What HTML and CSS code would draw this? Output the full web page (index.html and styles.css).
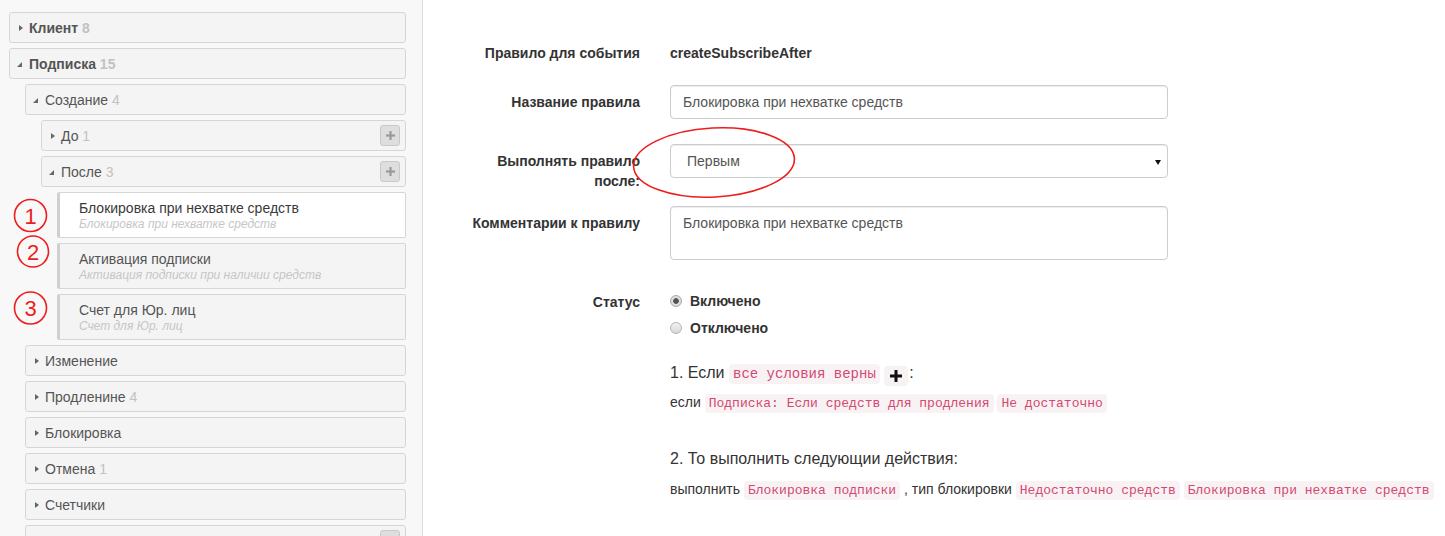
FILE: index.html
```html
<!DOCTYPE html>
<html lang="ru">
<head>
<meta charset="utf-8">
<title>Правила</title>
<link rel="stylesheet" href="styles.css">
</head>
<body>
<div class="page">
  <aside class="sidebar">
    <div class="panel top"><span class="tri closed"></span><span class="name">Клиент</span>&nbsp;<span class="cnt">8</span></div>
    <div class="panel top"><span class="tri open"></span><span class="name">Подписка</span>&nbsp;<span class="cnt">15</span></div>
    <div class="children">
      <div class="panel"><span class="tri open"></span><span class="name">Создание</span>&nbsp;<span class="cnt">4</span></div>
      <div class="children">
        <div class="panel"><span class="tri closed"></span><span class="name">До</span>&nbsp;<span class="cnt">1</span><span class="add"><svg width="9" height="9" viewBox="0 0 9 9"><rect x="3.4" y="0" width="2.2" height="9" fill="#9a9a9a"/><rect x="0" y="3.4" width="9" height="2.2" fill="#9a9a9a"/></svg></span></div>
        <div class="panel"><span class="tri open"></span><span class="name">После</span>&nbsp;<span class="cnt">3</span><span class="add"><svg width="9" height="9" viewBox="0 0 9 9"><rect x="3.4" y="0" width="2.2" height="9" fill="#9a9a9a"/><rect x="0" y="3.4" width="9" height="2.2" fill="#9a9a9a"/></svg></span></div>
        <div class="children">
          <div class="rule active">
            <div class="rule-title">Блокировка при нехватке средств</div>
            <div class="rule-sub">Блокировка при нехватке средств</div>
          </div>
          <div class="rule">
            <div class="rule-title">Активация подписки</div>
            <div class="rule-sub">Активация подписки при наличии средств</div>
          </div>
          <div class="rule">
            <div class="rule-title">Счет для Юр. лиц</div>
            <div class="rule-sub">Счет для Юр. лиц</div>
          </div>
        </div>
      </div>
      <div class="panel"><span class="tri closed"></span><span class="name">Изменение</span></div>
      <div class="panel"><span class="tri closed"></span><span class="name">Продленине</span>&nbsp;<span class="cnt">4</span></div>
      <div class="panel"><span class="tri closed"></span><span class="name">Блокировка</span></div>
      <div class="panel"><span class="tri closed"></span><span class="name">Отмена</span>&nbsp;<span class="cnt">1</span></div>
      <div class="panel"><span class="tri closed"></span><span class="name">Счетчики</span></div>
      <div class="panel"><span class="tri closed"></span><span class="name">Уведомления</span>&nbsp;<span class="cnt">6</span><span class="add"><svg width="9" height="9" viewBox="0 0 9 9"><rect x="3.4" y="0" width="2.2" height="9" fill="#9a9a9a"/><rect x="0" y="3.4" width="9" height="2.2" fill="#9a9a9a"/></svg></span></div>
    </div>
  </aside>

  <main class="main">
    <div class="row r1">
      <div class="lbl">Правило для события</div>
      <div class="ctl"><div class="static">createSubscribeAfter</div></div>
    </div>
    <div class="row r2">
      <div class="lbl">Название правила</div>
      <div class="ctl"><input class="input" type="text" value="Блокировка при нехватке средств"></div>
    </div>
    <div class="row r3">
      <div class="lbl">Выполнять правило после:</div>
      <div class="ctl"><div class="select"><span>Первым</span><span class="caret"></span></div></div>
    </div>
    <div class="row r4">
      <div class="lbl">Комментарии к правилу</div>
      <div class="ctl"><textarea class="input area">Блокировка при нехватке средств</textarea></div>
    </div>
    <div class="row r5">
      <div class="lbl">Статус</div>
      <div class="ctl radios">
        <div class="radio"><span class="dot checked"></span>Включено</div>
        <div class="radio"><span class="dot"></span>Отключено</div>
      </div>
    </div>
    <div class="row">
      <div class="lbl"></div>
      <div class="ctl logic">
        <div class="h">1. Если <code class="big">все условия верны</code> <span class="pcode"><svg width="12" height="12" viewBox="0 0 12 12"><rect x="4.5" y="0" width="3" height="12" fill="#111"/><rect x="0" y="4.5" width="12" height="3" fill="#111"/></svg></span>:</div>
        <div class="p first">если <code>Подписка: Если средств для продления</code> <code>Не достаточно</code></div>
        <div class="h h2">2. То выполнить следующии действия:</div>
        <div class="p second">выполнить <code>Блокировка подписки</code> , тип блокировки <code>Недостаточно средств</code> <code>Блокировка при нехватке средств</code></div>
      </div>
    </div>
  </main>

  <svg class="marks" width="1445" height="536" viewBox="0 0 1445 536">
    <g fill="none" stroke="#ee1c1c" stroke-width="1.6">
      <circle cx="30.5" cy="215.5" r="16"/>
      <circle cx="33" cy="251.5" r="15.5"/>
      <circle cx="30.5" cy="308" r="16"/>
      <ellipse cx="714" cy="162.5" rx="80.5" ry="34.5" transform="rotate(-3 714 162.5)"/>
    </g>
    <g fill="#ee1c1c" font-family="Liberation Sans, Arial, sans-serif" font-size="22" text-anchor="middle">
      <text x="30.5" y="223.5">1</text>
      <text x="33" y="259.5">2</text>
      <text x="30.5" y="316">3</text>
    </g>
  </svg>
</div>
</body>
</html>
```

FILE: styles.css
```css
* { box-sizing: border-box; }
html, body { margin: 0; height: 100%; }
body {
  font-family: "Liberation Sans", Arial, sans-serif;
  font-size: 14px;
  line-height: 20px;
  color: #333;
  background: #fff;
  overflow: hidden;
}
.page { position: relative; display: flex; min-height: 536px; }

/* sidebar */
.sidebar {
  width: 423px;
  flex: none;
  background: #f8f8f8;
  border-right: 1px solid #dcdcdc;
  padding: 12px 16px 0 9px;
}
.children { padding-left: 16px; }
.panel {
  height: 31px;
  display: flex;
  align-items: center;
  background: #f4f4f4;
  border: 1px solid #d6d6d6;
  border-radius: 3px;
  margin-bottom: 5px;
  color: #555;
  padding: 0 5px 0 7px;
  white-space: nowrap;
}
.panel.top { font-weight: bold; }
.cnt { color: #c2c2c2; }
.tri { width: 12px; height: 12px; position: relative; flex: none; }
.tri.closed::before {
  content: "";
  position: absolute;
  left: 2px; top: 3px;
  border-left: 4px solid #666;
  border-top: 3px solid transparent;
  border-bottom: 3px solid transparent;
}
.tri.open::before {
  content: "";
  position: absolute;
  left: 0; top: 4px;
  border-bottom: 5px solid #666;
  border-left: 5px solid transparent;
}
.add {
  margin-left: auto;
  width: 20px;
  height: 21px;
  background: #dedede;
  border: 1px solid #c9c9c9;
  border-radius: 3px;
  display: flex;
  align-items: center;
  justify-content: center;
}
.add svg { display: block; }

.rule {
  height: 46px;
  border: 1px solid #d6d6d6;
  border-left: 3px solid #cfcfcf;
  border-radius: 2px;
  background: #f4f4f4;
  margin-bottom: 5px;
  padding: 5px 0 0 19px;
}
.rule.active { background: #fff; }
.rule-title { font-size: 14px; line-height: 20px; color: #555; }
.rule.active .rule-title { color: #3a3a3a; }
.rule-sub { font-size: 12px; line-height: 13px; font-style: italic; color: #c6c6c6; }

/* main form */
.main { flex: 1; min-width: 0; padding: 36px 0 0 37px; }
.row { display: flex; gap: 30px; margin-bottom: 15px; }
.row.r2, .row.r4 { margin-bottom: 25px; }
.row.r5 { margin-bottom: 25px; }
.lbl {
  width: 180px;
  flex: none;
  text-align: right;
  font-weight: bold;
  padding-top: 7px;
  color: #333;
}
.ctl { flex: 1; min-width: 0; }
.static { padding-top: 7px; min-height: 34px; font-weight: bold; color: #333; }
.input {
  display: block;
  width: 498px;
  height: 34px;
  margin: 0;
  border: 1px solid #ccc;
  border-radius: 4px;
  padding: 6px 12px;
  font: inherit;
  line-height: 20px;
  color: #555;
  background: #fff;
  box-shadow: inset 0 1px 1px rgba(0,0,0,.075);
  outline: none;
}
.input.area { height: 54px; resize: none; overflow: hidden; }
.select {
  width: 498px;
  height: 34px;
  border: 1px solid #ccc;
  border-radius: 4px;
  padding: 0 6px 0 16px;
  display: flex;
  align-items: center;
  justify-content: space-between;
  color: #555;
  background: #fff;
  box-shadow: inset 0 1px 1px rgba(0,0,0,.075);
}
.caret {
  width: 0; height: 0;
  border-top: 5px solid #111;
  border-left: 3px solid transparent;
  border-right: 3px solid transparent;
  margin-top: 2px;
}

.radios { padding-top: 6px; }
.radio {
  display: flex;
  align-items: center;
  gap: 8px;
  height: 20px;
  margin-bottom: 7px;
  font-weight: bold;
  color: #333;
}
.radio:last-child { margin-bottom: 0; }
.dot {
  width: 12px; height: 12px;
  border-radius: 50%;
  border: 1px solid #b5b5b5;
  background: linear-gradient(#f2f2f2, #d8d8d8);
  flex: none;
}
.dot.checked {
  background: radial-gradient(circle, #555 0, #555 2.5px, #e4e4e4 3.2px, #d0d0d0 100%);
  border-color: #a8a8a8;
}

.logic { white-space: nowrap; }
.h { font-size: 16px; line-height: 20px; height: 20px; color: #333; }
.h2 { margin-top: 37px; }
.p { font-size: 14px; line-height: 20px; height: 20px; color: #333; }
.p.first { margin-top: 9px; }
.p.second { margin-top: 10px; }
code {
  font-family: "Liberation Mono", "Courier New", monospace;
  font-size: 13px;
  color: #d24a72;
  background: #f9f2f4;
  border-radius: 4px;
  padding: 2px 4px;
}
code.big { font-size: 14px; }
.pcode {
  display: inline-flex;
  align-items: center;
  justify-content: center;
  width: 24px;
  height: 20px;
  background: #f7f2f3;
  border-radius: 4px;
  vertical-align: -4px;
  margin-right: 1px;
}

.marks { position: absolute; left: 0; top: 0; pointer-events: none; }
```
